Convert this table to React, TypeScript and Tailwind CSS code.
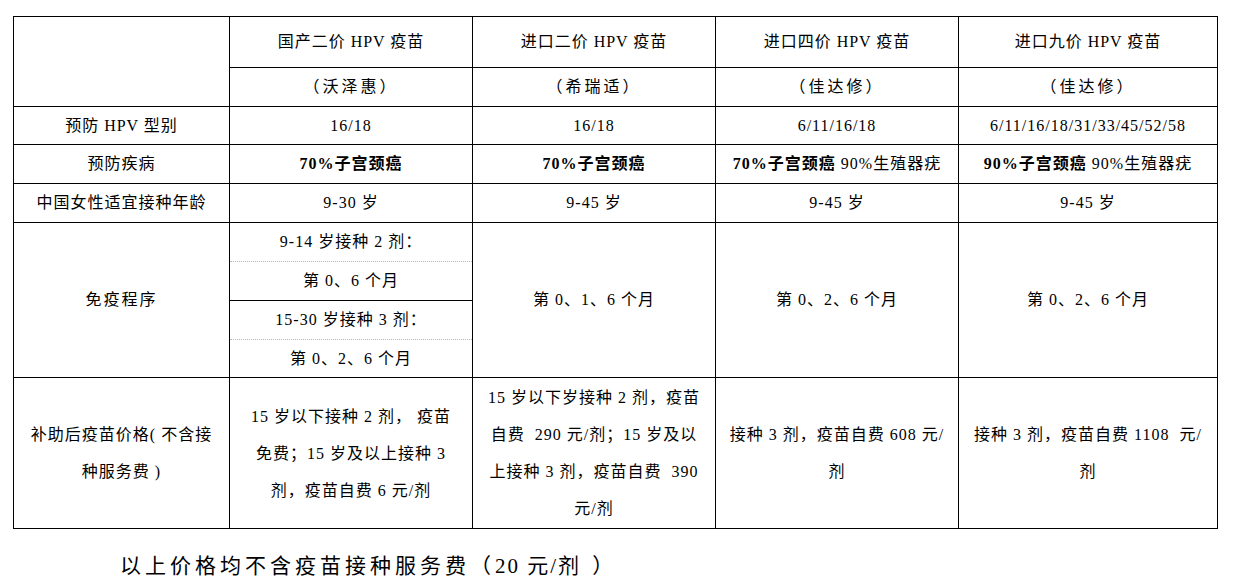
import React from "react";

const cell =
  "flex flex-col items-center justify-center text-center border-r border-b border-black";

function Lines({ lines }: { lines: React.ReactNode[] }) {
  return (
    <>
      {lines.map((l, i) => (
        <div key={i} className="leading-[37px] whitespace-pre">
          {l}
        </div>
      ))}
    </>
  );
}

const headers = [
  ["国产二价 HPV 疫苗", "（沃泽惠）"],
  ["进口二价 HPV 疫苗", "（希瑞适）"],
  ["进口四价 HPV 疫苗", "（佳达修）"],
  ["进口九价 HPV 疫苗", "（佳达修）"],
];

const types = ["16/18", "16/18", "6/11/16/18", "6/11/16/18/31/33/45/52/58"];

const diseases: React.ReactNode[] = [
  <b key="a" className="font-bold">70%子宫颈癌</b>,
  <b key="b" className="font-bold">70%子宫颈癌</b>,
  <span key="c">
    <b className="font-bold">70%子宫颈癌</b> 90%生殖器疣
  </span>,
  <span key="d">
    <b className="font-bold">90%子宫颈癌</b> 90%生殖器疣
  </span>,
];

const ages = ["9-30 岁", "9-45 岁", "9-45 岁", "9-45 岁"];

const prices = [
  ["15 岁以下接种 2 剂， 疫苗", "免费；15 岁及以上接种 3", "剂，疫苗自费 6 元/剂"],
  ["15 岁以下岁接种 2 剂，疫苗", "自费  290 元/剂；15 岁及以", "上接种 3 剂，疫苗自费  390", "元/剂"],
  ["接种 3 剂，疫苗自费 608 元/", "剂"],
  ["接种 3 剂，疫苗自费 1108  元/", "剂"],
];

export default function App() {
  return (
    <div className="bg-white w-[1239px] h-[585px] overflow-hidden text-black font-['Liberation_Serif','Noto_Sans_CJK_SC',serif] text-[16px] tracking-[1px]">
      <div className="pl-[13px] pt-[16px]">
        <div className="grid grid-cols-[216px_243px_243px_243px_259px] grid-rows-[51px_39px_38px_39px_39px_155px_151px] border-l border-t border-black w-[1205px]">
          {/* header */}
          <div className={`${cell} row-span-2`} />
          {headers.map(([name]) => (
            <div key={name} className={cell}>
              {name}
            </div>
          ))}
          {headers.map(([, brand], i) => (
            <div key={i} className={`${cell} tracking-[3px]`}>
              {brand}
            </div>
          ))}

          <div className={cell}>预防 HPV 型别</div>
          {types.map((t, i) => (
            <div key={i} className={cell}>
              {t}
            </div>
          ))}

          <div className={cell}>预防疾病</div>
          {diseases.map((d, i) => (
            <div key={i} className={cell}>
              {d}
            </div>
          ))}

          <div className={cell}>中国女性适宜接种年龄</div>
          {ages.map((a, i) => (
            <div key={i} className={cell}>
              {a}
            </div>
          ))}

          {/* schedule */}
          <div className={`${cell} tracking-[2px]`}>免疫程序</div>
          <div className="flex flex-col border-r border-b border-black">
            <div className="h-[39px] flex items-center justify-center border-b border-dotted border-[#b8b8b8]">
              9-14 岁接种 2 剂：
            </div>
            <div className="h-[39px] flex items-center justify-center border-b border-black">
              第 0、6 个月
            </div>
            <div className="h-[39px] flex items-center justify-center border-b border-dotted border-[#b8b8b8]">
              15-30 岁接种 3 剂：
            </div>
            <div className="flex-1 flex items-center justify-center">第 0、2、6 个月</div>
          </div>
          <div className={cell}>第 0、1、6 个月</div>
          <div className={cell}>第 0、2、6 个月</div>
          <div className={cell}>第 0、2、6 个月</div>

          {/* prices */}
          <div className={cell}>
            <Lines lines={["补助后疫苗价格( 不含接", "种服务费 )"]} />
          </div>
          {prices.map((p, i) => (
            <div key={i} className={cell}>
              <Lines lines={p} />
            </div>
          ))}
        </div>
      </div>

      <p className="pl-[120px] mt-[21px] text-[21px] leading-[32px] tracking-[4px]">
        以上价格均不含疫苗接种服务费（<span className="tracking-[2px]">20 元/</span>剂 ）
      </p>
    </div>
  );
}
